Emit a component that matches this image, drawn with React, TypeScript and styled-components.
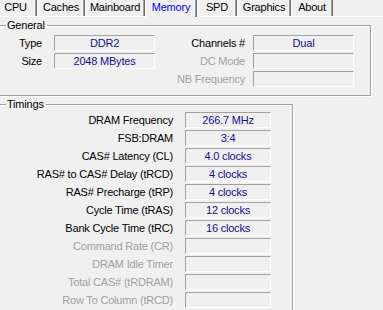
import styled, { createGlobalStyle } from 'styled-components';

const GlobalStyle = createGlobalStyle`
  body {
    margin: 0;
    background: #f0f0f0;
    font-family: "Liberation Sans", Arial, sans-serif;
    font-size: 11px;
    letter-spacing: -0.2px;
  }
`;

const tabs = [
  { name: 'CPU', width: 43 },
  { name: 'Caches', width: 48 },
  { name: 'Mainboard', width: 60 },
  { name: 'Memory', width: 52 },
  { name: 'SPD', width: 40 },
  { name: 'Graphics', width: 54 },
  { name: 'About', width: 42 },
];

const general = [
  { label: 'Type', value: 'DDR2', side: 'Channels #', sideValue: 'Dual' },
  { label: 'Size', value: '2048 MBytes', side: 'DC Mode', sideValue: '' },
  { label: '', value: null, side: 'NB Frequency', sideValue: '' },
];

const timings = [
  { label: 'DRAM Frequency', value: '266.7 MHz' },
  { label: 'FSB:DRAM', value: '3:4' },
  { label: 'CAS# Latency (CL)', value: '4.0 clocks' },
  { label: 'RAS# to CAS# Delay (tRCD)', value: '4 clocks' },
  { label: 'RAS# Precharge (tRP)', value: '4 clocks' },
  { label: 'Cycle Time (tRAS)', value: '12 clocks' },
  { label: 'Bank Cycle Time (tRC)', value: '16 clocks' },
  { label: 'Command Rate (CR)', value: '' },
  { label: 'DRAM Idle Timer', value: '' },
  { label: 'Total CAS# (tRDRAM)', value: '' },
  { label: 'Row To Column (tRCD)', value: '' },
];

const App = () => {
  return (
    <Window>
      <GlobalStyle />
      <TabBar>
        {tabs.map(t => (
          <Tab key={t.name} $active={t.name === 'Memory'} style={{ width: t.width }}>
            {t.name}
          </Tab>
        ))}
      </TabBar>
      <Body>
        <Group $width={373} $height={71}>
          <GroupTitle>General</GroupTitle>
          <GeneralGrid>
            {general.map((row, i) => (
              <Row key={i}>
                <Label $width={43} $disabled={false}>{row.label}</Label>
                {row.value !== null ? <Field $width={101}>{row.value}</Field> : <Spacer />}
                <Label $width={90} $disabled={!row.sideValue}>{row.side}</Label>
                <Field $width={101}>{row.sideValue}</Field>
              </Row>
            ))}
          </GeneralGrid>
        </Group>
        <Group $width={295} $height={220}>
          <GroupTitle>Timings</GroupTitle>
          <TimingList>
            {timings.map(t => (
              <Row key={t.label}>
                <Label $width={174} $disabled={!t.value}>{t.label}</Label>
                <Field $width={86}>{t.value}</Field>
              </Row>
            ))}
          </TimingList>
        </Group>
      </Body>
    </Window>
  );
};

const Window = styled.div`
  width: 383px;
  height: 310px;
  overflow: hidden;
  background: #f0f0f0;
`;

const TabBar = styled.div`
  display: flex;
  height: 16px;
  margin-left: -6px;
  position: relative;
  z-index: 1;
`;

const Tab = styled.div<{ $active: boolean }>`
  box-sizing: border-box;
  height: ${p => (p.$active ? '17px' : '16px')};
  display: flex;
  align-items: center;
  justify-content: center;
  padding-bottom: ${p => (p.$active ? '3px' : '2px')};
  border-left: 1px solid #fff;
  border-right: 1px solid #696969;
  box-shadow: inset -1px 0 0 #a0a0a0;
  background: #f0f0f0;
  color: ${p => (p.$active ? '#0000ff' : '#000')};
  white-space: nowrap;
`;

const Body = styled.div`
  border-top: 1px solid #fff;
  padding-top: 8px;
  margin-left: -2px;
  display: flex;
  flex-direction: column;
  gap: 8px;
`;

const Group = styled.div<{ $width: number; $height: number }>`
  position: relative;
  box-sizing: border-box;
  width: ${p => p.$width}px;
  height: ${p => p.$height}px;
  border: 1px solid #a0a0a0;
  box-shadow: 1px 1px 0 #fff, inset 1px 1px 0 #fff;
`;

const GroupTitle = styled.span`
  position: absolute;
  top: -8px;
  left: 7px;
  padding: 0 2px 0 1px;
  background: #f0f0f0;
  line-height: 14px;
  color: #000;
`;

const GeneralGrid = styled.div`
  display: flex;
  flex-direction: column;
  gap: 2px;
  padding-top: 9px;
`;

const TimingList = styled.div`
  display: flex;
  flex-direction: column;
  gap: 2px;
  padding-top: 7px;
`;

const Row = styled.div`
  display: flex;
  align-items: center;
  height: 16px;
`;

const Label = styled.div<{ $width: number; $disabled: boolean }>`
  width: ${p => p.$width}px;
  text-align: right;
  margin-right: ${p => (p.$width === 43 ? 12 : p.$width === 90 ? 8 : 12)}px;
  color: ${p => (p.$disabled ? '#a0a0a0' : '#000')};
  white-space: nowrap;
`;

const Field = styled.div<{ $width: number }>`
  box-sizing: border-box;
  width: ${p => p.$width}px;
  height: 16px;
  border-top: 1px solid #a0a0a0;
  border-left: 1px solid #a0a0a0;
  border-bottom: 1px solid #fff;
  border-right: 1px solid #fff;
  display: flex;
  align-items: center;
  justify-content: center;
  color: #101090;
  white-space: nowrap;
`;

const Spacer = styled.div`
  width: 101px;
`;

export default App;
